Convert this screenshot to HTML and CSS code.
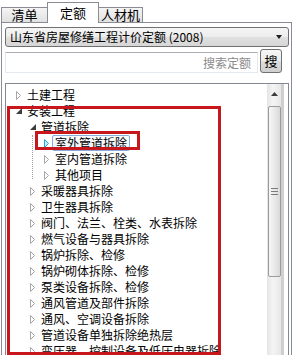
FILE: index.html
```html
<!DOCTYPE html>
<html lang="zh-CN">
<head>
    <meta charset="UTF-8">
    <title>定额</title>
    <link rel="stylesheet" href="styles.css">
</head>
<body>
<div class="window">
    <div class="tabs">
        <div class="tab tab-qd">清单</div>
        <div class="tab tab-de active">定额</div>
        <div class="tab tab-rcj">人材机</div>
    </div>

    <div class="panel">
        <div class="combo">
            <span class="combo-text">山东省房屋修缮工程计价定额 (2008)</span>
            <span class="combo-arrow"></span>
        </div>

        <div class="search-row">
            <div class="search-input">搜索定额</div>
            <div class="search-btn">搜</div>
        </div>

        <div class="tree">
            <div class="tree-list">
                <div class="row lv0"><span class="toggle"><svg width="6" height="9"><path d="M0.5 0.5 L4.5 4.5 L0.5 8.5 Z" fill="none" stroke="#a6a6a6"/></svg></span><span class="label">土建工程</span></div>
                <div class="row lv0"><span class="toggle"><svg width="6" height="6"><path d="M6 0 L6 6 L0 6 Z" fill="#3c3c3c"/></svg></span><span class="label">安装工程</span></div>
                <div class="row lv1"><span class="toggle"><svg width="6" height="6"><path d="M6 0 L6 6 L0 6 Z" fill="#3c3c3c"/></svg></span><span class="label">管道拆除</span></div>
                <div class="children">
                    <div class="row lv2"><span class="toggle"><svg width="6" height="9"><path d="M0.5 0.5 L4.5 4.5 L0.5 8.5 Z" fill="#c6e8f8" stroke="#29a3dc"/></svg></span><span class="label selected">室外管道拆除</span></div>
                    <div class="row lv2"><span class="toggle"><svg width="6" height="9"><path d="M0.5 0.5 L4.5 4.5 L0.5 8.5 Z" fill="none" stroke="#a6a6a6"/></svg></span><span class="label">室内管道拆除</span></div>
                    <div class="row lv2"><span class="toggle"><svg width="6" height="9"><path d="M0.5 0.5 L4.5 4.5 L0.5 8.5 Z" fill="none" stroke="#a6a6a6"/></svg></span><span class="label">其他项目</span></div>
                </div>
                <div class="row lv1"><span class="toggle"><svg width="6" height="9"><path d="M0.5 0.5 L4.5 4.5 L0.5 8.5 Z" fill="none" stroke="#a6a6a6"/></svg></span><span class="label">采暖器具拆除</span></div>
                <div class="row lv1"><span class="toggle"><svg width="6" height="9"><path d="M0.5 0.5 L4.5 4.5 L0.5 8.5 Z" fill="none" stroke="#a6a6a6"/></svg></span><span class="label">卫生器具拆除</span></div>
                <div class="row lv1"><span class="toggle"><svg width="6" height="9"><path d="M0.5 0.5 L4.5 4.5 L0.5 8.5 Z" fill="none" stroke="#a6a6a6"/></svg></span><span class="label">阀门、法兰、栓类、水表拆除</span></div>
                <div class="row lv1"><span class="toggle"><svg width="6" height="9"><path d="M0.5 0.5 L4.5 4.5 L0.5 8.5 Z" fill="none" stroke="#a6a6a6"/></svg></span><span class="label">燃气设备与器具拆除</span></div>
                <div class="row lv1"><span class="toggle"><svg width="6" height="9"><path d="M0.5 0.5 L4.5 4.5 L0.5 8.5 Z" fill="none" stroke="#a6a6a6"/></svg></span><span class="label">锅炉拆除、检修</span></div>
                <div class="row lv1"><span class="toggle"><svg width="6" height="9"><path d="M0.5 0.5 L4.5 4.5 L0.5 8.5 Z" fill="none" stroke="#a6a6a6"/></svg></span><span class="label">锅炉砌体拆除、检修</span></div>
                <div class="row lv1"><span class="toggle"><svg width="6" height="9"><path d="M0.5 0.5 L4.5 4.5 L0.5 8.5 Z" fill="none" stroke="#a6a6a6"/></svg></span><span class="label">泵类设备拆除、检修</span></div>
                <div class="row lv1"><span class="toggle"><svg width="6" height="9"><path d="M0.5 0.5 L4.5 4.5 L0.5 8.5 Z" fill="none" stroke="#a6a6a6"/></svg></span><span class="label">通风管道及部件拆除</span></div>
                <div class="row lv1"><span class="toggle"><svg width="6" height="9"><path d="M0.5 0.5 L4.5 4.5 L0.5 8.5 Z" fill="none" stroke="#a6a6a6"/></svg></span><span class="label">通风、空调设备拆除</span></div>
                <div class="row lv1"><span class="toggle"><svg width="6" height="9"><path d="M0.5 0.5 L4.5 4.5 L0.5 8.5 Z" fill="none" stroke="#a6a6a6"/></svg></span><span class="label">管道设备单独拆除绝热层</span></div>
                <div class="row lv1"><span class="toggle"><svg width="6" height="9"><path d="M0.5 0.5 L4.5 4.5 L0.5 8.5 Z" fill="none" stroke="#a6a6a6"/></svg></span><span class="label">变压器、控制设备及低压电器拆除</span></div>
            </div>
            <div class="scrollbar">
                <div class="sb-up"><svg width="7" height="4"><path d="M3.5 0 L7 4 L0 4 Z" fill="#3c3c3c"/></svg></div>
                <div class="sb-thumb"><span class="grip"></span></div>
            </div>
        </div>
    </div>

    <!-- annotation boxes drawn over the screenshot -->
    <div class="mark mark-big"></div>
    <div class="mark mark-small"></div>
</div>
</body>
</html>
```

FILE: styles.css
```css
body {
    margin: 0;
    font-family: "Noto Sans CJK SC", "Noto Sans", sans-serif;
    font-size: 12px;
    color: #000;
    background: #fff;
}

.window {
    position: relative;
    width: 293px;
    height: 355px;
    overflow: hidden;
}

/* tabs */
.tabs {
    display: flex;
    align-items: flex-end;
    height: 22px;
    padding-left: 1px;
}

.tab {
    box-sizing: border-box;
    height: 15px;
    line-height: 14px;
    font-size: 13px;
    border: 1px solid #898c95;
    border-bottom: none;
    background: linear-gradient(#f4f4f4, #e1e1e1);
    text-align: center;
}

.tab-qd { width: 47px; }
.tab-de { width: 52px; margin-left: -1px; }
.tab-rcj { width: 45px; margin-left: -1px; }

.tab.active {
    position: relative;
    z-index: 1;
    height: 21px;
    line-height: 19px;
    margin-bottom: -1px;
    background: #fff;
}

/* panel */
.panel {
    margin: 0 1px;
    height: 340px;
    border: 1px solid #898c95;
    padding: 4px 2px 0 3px;
}

.combo {
    box-sizing: border-box;
    display: flex;
    align-items: center;
    justify-content: space-between;
    height: 20px;
    padding: 0 6px 0 4px;
    border: 1px solid #707070;
    border-radius: 3px;
    background: linear-gradient(#f6f6f6, #ececec 50%, #e0e0e0 51%, #d6d6d6);
}

.combo-text {
    line-height: 18px;
}

.combo-arrow {
    width: 0;
    height: 0;
    border-left: 3.5px solid transparent;
    border-right: 3.5px solid transparent;
    border-top: 4px solid #1e1e1e;
}

.search-row {
    display: flex;
    align-items: flex-end;
    height: 24px;
    margin-top: 2px;
}

.search-input {
    box-sizing: border-box;
    width: 253px;
    height: 21px;
    line-height: 19px;
    padding-right: 6px;
    border: 1px solid #e3e9ef;
    border-top-color: #abadb3;
    text-align: right;
    color: #8a8a8a;
}

.search-btn {
    box-sizing: border-box;
    width: 22px;
    height: 24px;
    margin-left: 2px;
    line-height: 22px;
    font-size: 13px;
    text-align: center;
    border: 1px solid #707070;
    border-radius: 3px;
    background: linear-gradient(#f6f6f6, #ebebeb 50%, #dddddd 51%, #cfcfcf);
}

/* tree */
.tree {
    display: flex;
    height: 280px;
    margin-top: 10px;
    border: 1px solid #828790;
}

.tree-list {
    flex: 1;
    padding-top: 3px;
    overflow: hidden;
}

.row {
    display: flex;
    align-items: center;
    height: 16px;
    white-space: nowrap;
}

.lv0 { padding-left: 8px; }
.lv1 { padding-left: 22px; }
.lv2 { padding-left: 36px; }

.children {
    position: relative;
}

.children::before {
    content: "";
    position: absolute;
    left: 26px;
    top: 0;
    bottom: 4px;
    border-left: 1px dotted #a0a0a0;
}

.toggle {
    box-sizing: border-box;
    display: flex;
    align-items: center;
    width: 10px;
    height: 16px;
    padding-left: 2px;
}

.toggle svg {
    display: block;
}

.label {
    padding: 0 2px;
    line-height: 14px;
    border: 1px solid transparent;
}

.label.selected {
    border-color: #84acdd;
    border-radius: 2px;
    background: linear-gradient(#fbfcfe, #eaf2fc);
}

/* scrollbar */
.scrollbar {
    box-sizing: border-box;
    width: 17px;
    margin-right: 4px;
    border-left: 1px solid #e4e4e4;
    border-right: 3px solid #cfcfcf;
    background: linear-gradient(to right, #e8e8e8, #f4f4f4 40%, #e6e6e6);
}

.sb-up {
    display: flex;
    align-items: center;
    justify-content: center;
    height: 20px;
}

.sb-up svg {
    display: block;
}

.sb-thumb {
    box-sizing: border-box;
    display: flex;
    align-items: center;
    justify-content: center;
    height: 171px;
    margin-top: 2px;
    border: 1px solid #9b9b9b;
    border-radius: 2px;
    background: linear-gradient(to right, #f6f6f6, #e9e9e9 50%, #d9d9d9);
}

.grip {
    width: 7px;
    height: 5px;
    border-top: 1px solid #7a7a7a;
    border-bottom: 1px solid #7a7a7a;
    background: linear-gradient(transparent 2px, #7a7a7a 2px, #7a7a7a 3px, transparent 3px);
}

/* red annotation boxes */
.mark {
    position: absolute;
    box-sizing: border-box;
    border: 3px solid #c8161d;
}

.mark-big {
    left: 7px;
    top: 106px;
    width: 214px;
    height: 249px;
}

.mark-small {
    left: 35px;
    top: 131px;
    width: 105px;
    height: 19px;
}
```
